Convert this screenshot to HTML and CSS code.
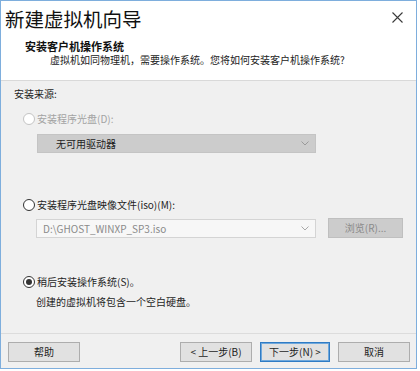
FILE: index.html
```html
<!DOCTYPE html>
<html lang="zh-CN">
<head>
    <meta charset="UTF-8">
    <title>新建虚拟机向导</title>
    <link rel="stylesheet" href="styles.css">
</head>
<body>

    <div class="wizard">
        <div class="header">
            <div class="title-row">
                <h1>新建虚拟机向导</h1>
                <svg class="close" width="11" height="11" viewBox="0 0 11 11">
                    <path d="M0.5 0.5 L10.5 10.5 M10.5 0.5 L0.5 10.5" stroke="#3a3a3a" stroke-width="1.1" fill="none"/>
                </svg>
            </div>
            <h2>安装客户机操作系统</h2>
            <p class="subtitle">虚拟机如同物理机，需要操作系统。您将如何安装客户机操作系统?</p>
        </div>

        <div class="content">
            <div class="section-label">安装来源:</div>

            <div class="option disabled first">
                <span class="radio"></span>
                <span>安装程序光盘(D):</span>
            </div>
            <div class="select drive">
                <span>无可用驱动器</span>
                <svg class="chevron" width="8" height="5" viewBox="0 0 8 5">
                    <path d="M0.5 0.5 L4 4 L7.5 0.5" stroke="#9a9a9a" fill="none"/>
                </svg>
            </div>

            <div class="option iso">
                <span class="radio"></span>
                <span>安装程序光盘映像文件(iso)(M):</span>
            </div>
            <div class="iso-row">
                <div class="select path">
                    <span>D:\GHOST_WINXP_SP3.iso</span>
                    <svg class="chevron" width="8" height="5" viewBox="0 0 8 5">
                        <path d="M0.5 0.5 L4 4 L7.5 0.5" stroke="#a8a8a8" fill="none"/>
                    </svg>
                </div>
                <div class="btn browse">浏览(R)...</div>
            </div>

            <div class="option later">
                <span class="radio checked"></span>
                <span>稍后安装操作系统(S)。</span>
            </div>
            <p class="note">创建的虚拟机将包含一个空白硬盘。</p>
        </div>

        <div class="footer">
            <div class="btn">帮助</div>
            <div class="nav">
                <div class="btn">&lt; 上一步(B)</div>
                <div class="btn default">下一步(N) &gt;</div>
                <div class="btn">取消</div>
            </div>
        </div>
    </div>

</body>
</html>
```

FILE: styles.css
```css
body {
    margin: 0;
    padding: 0;
    background-color: #ffffff;
    font-family: "Noto Sans CJK SC", "Noto Sans", sans-serif;
    font-size: 10px;
    color: #1e1e1e;
}

.wizard {
    width: 415px;
    height: 367px;
    border: 1px solid #7eaedd;
    background-color: #f0f0f0;
}

.header {
    height: 79px;
    background-color: #ffffff;
    border-bottom: 1px solid #d9d9d9;
    padding: 0;
}

.title-row {
    display: flex;
    justify-content: space-between;
    align-items: center;
    padding: 6px 13px 0 4px;
}

h1 {
    margin: 0;
    font-size: 19.5px;
    font-weight: normal;
    line-height: 24px;
    color: #111;
}

.close {
    margin-top: -4px;
}

h2 {
    margin: 8px 0 0 24px;
    font-size: 11px;
    font-weight: bold;
    line-height: 14px;
    color: #111;
}

.subtitle {
    margin: 0 0 0 49px;
    line-height: 14px;
    color: #222;
}

.content {
    height: 252px;
    padding: 6px 0 0 13px;
    box-sizing: border-box;
}

.section-label {
    line-height: 14px;
}

.option {
    display: flex;
    align-items: center;
    gap: 2px;
    margin-left: 9px;
    line-height: 14px;
}

.option.first {
    margin-top: 11px;
}

.option.iso {
    margin-top: 45px;
}

.option.later {
    margin-top: 37px;
}

.option.disabled {
    color: #a3a3a3;
}

.radio {
    width: 10px;
    height: 10px;
    border: 1px solid #333;
    border-radius: 50%;
    background-color: #fff;
    position: relative;
}

.option.disabled .radio {
    border-color: #c4c4c4;
}

.radio.checked::after {
    content: "";
    position: absolute;
    left: 2px;
    top: 2px;
    width: 6px;
    height: 6px;
    border-radius: 50%;
    background-color: #333;
}

.select {
    display: flex;
    justify-content: space-between;
    align-items: center;
    box-sizing: border-box;
    width: 279px;
    height: 19px;
    margin-left: 23px;
    padding: 0 6px 0 18px;
    line-height: 17px;
}

.select.drive {
    margin-top: 8px;
    background-color: #cccccc;
    border: 1px solid #c4c4c4;
    color: #222;
}

.iso-row {
    display: flex;
    align-items: center;
    gap: 12px;
    margin-top: 6px;
}

.select.path {
    margin-left: 22px;
    padding-left: 6px;
    background-color: #f7f7f7;
    border: 1px solid #d4d4d4;
    color: #8a8a8a;
    width: 280px;
}

.btn {
    box-sizing: border-box;
    width: 72px;
    height: 20px;
    background-color: #e1e1e1;
    border: 1px solid #adadad;
    text-align: center;
    line-height: 18px;
    color: #1e1e1e;
}

.btn.browse {
    width: 75px;
    background-color: #cccccc;
    border-color: #bfbfbf;
    color: #8a8a8a;
}

.btn.default {
    width: 70px;
    border: 1px solid #2f7bc4;
    box-shadow: inset 0 0 0 1px #6fa8dc;
}

.note {
    margin: 6px 0 0 22px;
    line-height: 14px;
}

.footer {
    display: flex;
    justify-content: space-between;
    border-top: 1px solid #dcdcdc;
    padding: 8px 6px 0 7px;
}

.nav {
    display: flex;
    gap: 8px;
}
```
